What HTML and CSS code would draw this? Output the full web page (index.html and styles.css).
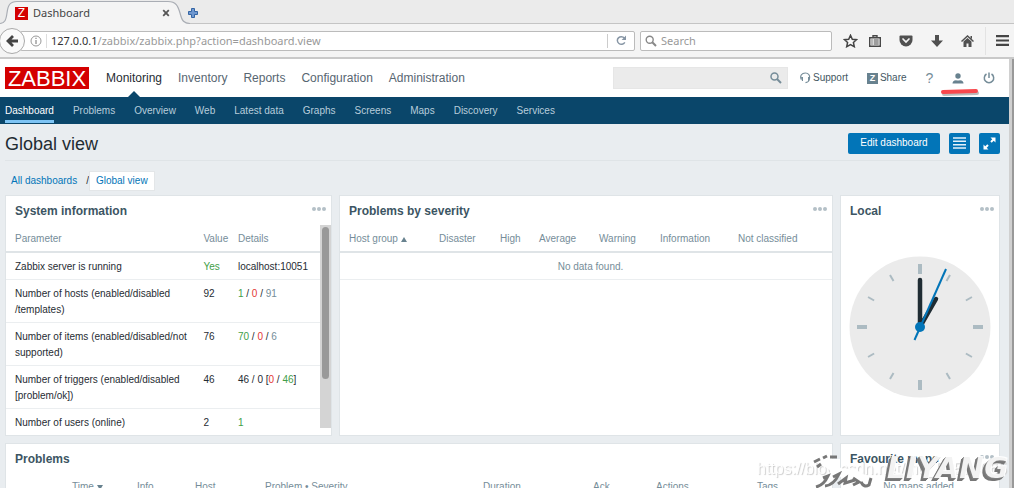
FILE: index.html
```html
<!DOCTYPE html>
<html lang="en">
<head>
<meta charset="utf-8">
<title>Dashboard</title>
<link rel="stylesheet" href="styles.css">
</head>
<body>
<div class="browser">
  <div class="tabstrip">
    <svg class="tab-shape" width="190" height="25" viewBox="0 0 190 25"><path d="M0 24C5 23 6 20 7 13C8 5 10 1.500 17 1.500H168C176 1.500 178 6 180 13C182 21 184 23.500 190 24V25H0Z" fill="#f4f4f4"/><path d="M0 23.500C5 23 6 20 7 13C8 5 10 1.500 17 1.500H168C176 1.500 178 6 180 13C182 21 184 23.500 190 23.500" fill="none" stroke="#a9adb4" stroke-width="1.200"/></svg>
    <div class="tab">
      <span class="favicon">Z</span>
      <span class="tab-title">Dashboard</span>
      <button class="bare" aria-label="Close tab"><svg width="8" height="8" viewBox="0 0 8 8"><path d="M1.200 1.200L6.800 6.800M6.800 1.200L1.200 6.800" stroke="#555" stroke-width="1.800"/></svg></button>
    </div>
    <button class="bare" aria-label="New tab"><svg width="10" height="10" viewBox="0 0 10 10"><path d="M3.500 .5h3v3h3v3h-3v3h-3v-3h-3v-3h3z" fill="#6f98d0" stroke="#3465a4"/></svg></button>
  </div>
  <div class="toolbar">
    <button class="back" aria-label="Back"><svg width="13" height="12" viewBox="0 0 13 12"><path d="M7 1L2 6L7 11M2 6H12" fill="none" stroke="#444" stroke-width="2.800"/></svg></button>
    <div class="address">
      <svg width="12" height="12" viewBox="0 0 12 12"><circle cx="6" cy="6" r="5" fill="none" stroke="#999"/><path d="M6 5v4M6 2.700v1.200" stroke="#888" stroke-width="1.200"/></svg>
      <span class="url"><b>127.0.0.1</b>/zabbix/zabbix.php?action=dashboard.view</span>
      <button class="bare reload" aria-label="Reload"><svg width="11" height="11" viewBox="0 0 11 11"><path d="M8.800 7.400A4 3.800 0 1 1 8.400 3" fill="none" stroke="#8796a5" stroke-width="1.500"/><path d="M10 .5V5H5.600Z" fill="#8796a5"/></svg></button>
    </div>
    <label class="web-search">
      <svg width="12" height="12" viewBox="0 0 12 12"><circle cx="4.700" cy="4.700" r="3.500" fill="none" stroke="#888" stroke-width="1.400"/><path d="M7.300 7.300L11 11" stroke="#888" stroke-width="2"/></svg>
      <input type="text" placeholder="Search" aria-label="Search the web">
    </label>
    <div class="tools">
      <button class="bare star" aria-label="Bookmark"><svg width="15" height="14" viewBox="0 0 15 14"><path d="M7.500 1.300L9.300 5.200L13.500 5.700L10.400 8.500L11.300 12.700L7.500 10.600L3.700 12.700L4.600 8.500L1.500 5.700L5.700 5.200Z" fill="#f8f8f8" stroke="#444" stroke-width="1.500"/></svg></button>
      <button class="bare" aria-label="Library"><svg width="12" height="12" viewBox="0 0 12 12"><path d="M.7 2.700h10.600v8.600H.7zM4 2.700V.7h4v2" fill="none" stroke="#484848" stroke-width="1.400"/><path d="M2.300 5h1.400M4.700 5h5M2.300 7h1.400M4.700 7h5M2.300 9h1.400M4.700 9h5" stroke="#484848"/></svg></button>
      <button class="bare" aria-label="Pocket"><svg width="14" height="12" viewBox="0 0 14 12"><path d="M1.500 .5h11q1 0 1 1V5a6.500 6.500 0 0 1-13 0V1.500q0-1 1-1z" fill="#505050"/><path d="M4 4l3 3l3-3" fill="none" stroke="#f4f4f4" stroke-width="1.700" stroke-linecap="round"/></svg></button>
      <button class="bare" aria-label="Downloads"><svg width="12" height="12" viewBox="0 0 12 12"><path d="M4 0h4v5.500h4L6 12L0 5.500h4z" fill="#505050"/></svg></button>
      <button class="bare" aria-label="Home"><svg width="13" height="12" viewBox="0 0 13 12"><path d="M.5 6.500L6.500 1l6 5.500" fill="none" stroke="#505050" stroke-width="1.500"/><path d="M9.500 1H11v3L9.500 3zM2.500 6.500L6.500 3l4 3.500V12h-3V8.500h-2V12h-3z" fill="#505050"/></svg></button>
      <button class="bare menu" aria-label="Menu"><svg width="13" height="11" viewBox="0 0 13 11"><path d="M0 1.200h13M0 5.500h13M0 9.800h13" stroke="#444" stroke-width="2.200"/></svg></button>
    </div>
  </div>
</div>

<div class="viewport">
<div class="page">
  <header class="top">
    <a class="logo" href="#">ZABBIX</a>
    <nav class="main-nav">
      <a class="current" href="#">Monitoring</a><a href="#">Inventory</a><a href="#">Reports</a><a href="#">Configuration</a><a href="#">Administration</a>
    </nav>
    <form class="search">
      <input type="text" aria-label="Search">
      <button class="bare" type="button" aria-label="Search"><svg width="12" height="12" viewBox="0 0 12 12"><circle cx="4.500" cy="4.500" r="3.500" fill="none" stroke="#768d99" stroke-width="1.500"/><path d="M7 7l4 4" stroke="#768d99" stroke-width="2"/></svg></button>
    </form>
    <div class="user-nav">
      <a href="#"><svg width="11" height="12" viewBox="0 0 11 12"><path d="M1.300 7.500C-.5 3.500 2 1 5.300 1S10.500 3.500 9.200 7.500C8.800 9.500 7.500 10.500 5.500 10.700" fill="none" stroke="#768d99" stroke-width="1.200"/><path d="M1 5h2v4H2zM8 5h2L9 9H8z" fill="#768d99"/></svg>Support</a>
      <a href="#"><span class="share">Z</span>Share</a>
      <a class="help" href="#">?</a>
      <a class="profile" href="#" aria-label="Profile"><svg width="12" height="11" viewBox="0 0 12 11"><circle cx="6" cy="3" r="2.700" fill="#68828f"/><path d="M.5 10.500Q.5 7.500 4 7.200Q6 8 8 7.200Q11.500 7.500 11.500 10.500z" fill="#68828f"/></svg><svg class="mark" width="42" height="10" viewBox="0 0 42 10"><path d="M4 6L37 5" stroke="#bbb" stroke-width="4" stroke-linecap="round"/><path d="M3 4L36 3" stroke="#f8484d" stroke-width="4" stroke-linecap="round"/></svg></a>
      <a href="#" aria-label="Sign out"><svg width="12" height="12" viewBox="0 0 12 12"><path d="M3.500 2A4.700 4.700 0 1 0 8.500 2M6 .5V6" fill="none" stroke="#768d99" stroke-width="1.500"/></svg></a>
    </div>
  </header>
  <nav class="sub-nav">
    <a class="current" href="#">Dashboard</a><a href="#">Problems</a><a href="#">Overview</a><a href="#">Web</a><a href="#">Latest data</a><a href="#">Graphs</a><a href="#">Screens</a><a href="#">Maps</a><a href="#">Discovery</a><a href="#">Services</a>
  </nav>
  <main>
    <div class="heading">
      <h1>Global view</h1>
      <button class="action">Edit dashboard</button>
      <button class="action square" aria-label="Actions"><svg width="13" height="12" viewBox="0 0 13 12"><path d="M0 1h13M0 4.300h13M0 7.700h13M0 11h13" stroke="#e5f1fa" stroke-width="1.600"/></svg></button>
      <button class="action square" aria-label="Fullscreen"><svg width="13" height="13" viewBox="0 0 13 13"><path d="M7.500 .5h5v5zM.5 7.500v5h5z" fill="#fff"/><path d="M8 5l3-3M2 11l3-3" stroke="#fff" stroke-width="2"/></svg></button>
    </div>
    <div class="crumbs"><a href="#">All dashboards</a><span>/</span><a class="selected" href="#">Global view</a></div>
    <div class="widgets">
      <section class="widget">
        <div class="widget-head"><h2>System information</h2><button class="bare dots" aria-label="Options"><i></i><i></i><i></i></button></div>
        <div class="scroll">
          <table class="system">
            <colgroup><col class="c-param"><col class="c-value"><col></colgroup>
            <thead><tr><th>Parameter</th><th>Value</th><th>Details</th></tr></thead>
            <tbody>
              <tr><td>Zabbix server is running</td><td><span class="green">Yes</span></td><td>localhost:10051</td></tr>
              <tr><td>Number of hosts (enabled/disabled<br>/templates)</td><td>92</td><td><span class="green">1</span> / <span class="red">0</span> / <span class="grey">91</span></td></tr>
              <tr><td>Number of items (enabled/disabled/not<br>supported)</td><td>76</td><td><span class="green">70</span> / <span class="red">0</span> / <span class="grey">6</span></td></tr>
              <tr><td>Number of triggers (enabled/disabled<br>[problem/ok])</td><td>46</td><td>46 / 0 [<span class="red">0</span> / <span class="green">46</span>]</td></tr>
              <tr><td>Number of users (online)</td><td>2</td><td><span class="green">1</span></td></tr>
            </tbody>
          </table>
          <div class="bar"><div class="thumb"></div></div>
        </div>
      </section>
      <section class="widget">
        <div class="widget-head"><h2>Problems by severity</h2><button class="bare dots" aria-label="Options"><i></i><i></i><i></i></button></div>
        <table class="severity">
          <colgroup><col class="s1"><col class="s2"><col class="s3"><col class="s4"><col class="s5"><col class="s6"><col></colgroup>
          <thead><tr><th>Host group <span class="up"></span></th><th>Disaster</th><th>High</th><th>Average</th><th>Warning</th><th>Information</th><th>Not classified</th></tr></thead>
          <tbody><tr><td colspan="7">No data found.</td></tr></tbody>
        </table>
      </section>
      <section class="widget">
        <div class="widget-head"><h2>Local</h2><button class="bare dots" aria-label="Options"><i></i><i></i><i></i></button></div>
        <div class="clock"><svg viewBox="0 0 142 142"><circle cx="71" cy="71" r="70.500" fill="#ebebeb"/>
          <g stroke="#acbbc2" stroke-width="4"><path d="M71 8v10M71 124v10M8 71h10M124 71h10"/></g>
          <g stroke="#acbbc2" stroke-width="2"><path d="M71 11v7" transform="rotate(30 71 71)"/><path d="M71 11v7" transform="rotate(60 71 71)"/><path d="M71 11v7" transform="rotate(120 71 71)"/><path d="M71 11v7" transform="rotate(150 71 71)"/><path d="M71 11v7" transform="rotate(210 71 71)"/><path d="M71 11v7" transform="rotate(240 71 71)"/><path d="M71 11v7" transform="rotate(300 71 71)"/><path d="M71 11v7" transform="rotate(330 71 71)"/></g>
          <path d="M71 71V24M71 71L87 43" stroke="#1f2c33" stroke-width="4.500" stroke-linecap="round"/><path d="M65.500 84L97 13" stroke="#0275b8" stroke-width="2"/><circle cx="71" cy="71" r="5" fill="#0275b8"/></svg></div>
      </section>
      <section class="widget wide">
        <div class="widget-head"><h2>Problems</h2></div>
        <table class="problems">
          <colgroup><col class="p1"><col class="p2"><col class="p3"><col class="p4"><col class="p5"><col class="p6"><col class="p7"><col></colgroup>
          <thead><tr><th>Time <span class="down"></span></th><th>Info</th><th>Host</th><th>Problem • Severity</th><th>Duration</th><th>Ack</th><th>Actions</th><th>Tags</th></tr></thead>
        </table>
      </section>
      <section class="widget">
        <div class="widget-head"><h2>Favourite maps</h2><button class="bare dots" aria-label="Options"><i></i><i></i><i></i></button></div>
        <p class="empty">No maps added.</p>
      </section>
    </div>
  </main>
</div>
<div class="page-bar"></div>
</div>
<div class="watermark">
  <span class="wm-url">https://blog.csdn.net/m0_52574065</span>
  <svg class="wm-sign" width="70" height="35" viewBox="0 0 70 35"><path d="M9 10L17 6H29V15L45 17L58 24V32H53L44 25L36 28L28 23L20 29H10L20 18Z" fill="#fff"/><g fill="none" stroke="#777" stroke-width="3"><path d="M3 9l6-3M12 5l4-2M19 4h7M6 14l4-3M5 34q8-2 12-11l-5 2M14 33q9-1 14-12l-6 3M27 31l8-6-1 5 10-3M42 25l6 4-6 3M50 29q3 6 8 3l2-7"/></g></svg>
  <span class="wm-name">LIYANG</span>
</div>
</body>
</html>
```
FILE: styles.css
```css
* { box-sizing: border-box; }
body { margin: 0; height: 100vh; overflow: hidden; display: flex; flex-direction: column; font: 11px/16px "Liberation Sans", Arial, sans-serif; color: #1f2c33; background: #e9edf0; }
a { text-decoration: none; color: #0275b8; }
svg { display: block; flex: none; }
button, input { font: inherit; }
.bare { border: 0; padding: 0; background: none; display: flex; align-items: center; flex: none; }

.browser { font-family: "Noto Sans", sans-serif; background: #f4f4f4; border-bottom: 2px solid #c9c9c9; }
.tabstrip { position: relative; height: 24px; display: flex; align-items: center; gap: 18px; padding: 3px 0 0 15px; background: #ebebeb; border-bottom: 1px solid #c4c4c4; }
.tab-shape { position: absolute; left: 0; top: 0; }
.tab { position: relative; width: 155px; display: flex; align-items: center; gap: 5px; color: #444; }
.tab-title { flex: 1; }
.favicon { width: 13px; height: 13px; background: #d40000; color: #fff; font: 12px/13px "Liberation Sans", sans-serif; text-align: center; }
.toolbar { height: 33px; display: flex; align-items: center; padding-right: 5px; }
.back { width: 26px; height: 26px; margin-left: -1px; border: 1px solid #aaa; border-radius: 50%; background: #fafafa; padding: 0; display: flex; align-items: center; justify-content: center; z-index: 1; flex: none; }
.address { flex: 1; height: 20px; margin-left: -5px; padding-left: 9px; border: 1px solid #bbb; border-radius: 2px; background: #fff; display: flex; align-items: center; gap: 4px; }
.url { flex: 1; border-left: 1px solid #ddd; padding-left: 4px; font-size: 11px; line-height: 14px; color: #999; }
.url b { font-weight: 400; color: #333; }
.reload { height: 14px; width: 27px; border-left: 1px solid #ccc; justify-content: center; }
.web-search { width: 192px; height: 20px; margin-left: 5px; padding-left: 4px; border: 1px solid #bbb; border-radius: 2px; background: #fff; display: flex; align-items: center; gap: 4px; }
.web-search input { width: 160px; border: 0; padding: 0; background: none; outline: 0; font-size: 11px; line-height: 14px; }
.web-search input::placeholder { color: #999; opacity: 1; }
.tools { display: flex; align-items: center; gap: 18px; margin-left: 11px; }
.star { margin-right: -7px; }
.menu { height: 28px; margin-left: -7px; padding-left: 10px; border-left: 1px solid #e3e3e3; }

.viewport { flex: 1; min-height: 0; display: flex; overflow: hidden; }
.page { flex: 1; min-width: 0; }
.page-bar { width: 5px; background: #999; border-left: 3px solid #d0d0d0; }
.top { height: 38px; display: flex; align-items: center; padding: 0 14px 0 5px; background: #fff; }
.logo { width: 84px; height: 22px; background: #d40000; color: #fff; font-size: 22px; line-height: 23px; text-align: center; }
.main-nav { flex: 1; display: flex; gap: 16px; margin-left: 17px; font-size: 12px; align-self: stretch; align-items: center; }
.main-nav a { position: relative; height: 38px; line-height: 38px; color: #576671; }
.main-nav .current { color: #1f2c33; }
.main-nav .current::after { content: ""; position: absolute; left: 50%; bottom: 0; margin-left: -6px; border: 6px solid transparent; border-top: 0; border-bottom-color: #0a466a; }
.search { width: 175px; height: 22px; display: flex; align-items: center; padding-right: 5px; background: #ebebeb; border: 1px solid #e6e6e6; }
.search input { flex: 1; min-width: 0; border: 0; background: none; outline: 0; }
.user-nav { width: 195px; margin-left: 12px; display: flex; justify-content: space-between; align-items: center; font-size: 10px; }
.user-nav a { display: flex; align-items: center; gap: 2px; color: #445762; }
.share { width: 11px; height: 11px; background: #68828f; color: #fff; font: bold 9px/11px "Liberation Sans", sans-serif; text-align: center; }
.user-nav .help { font-size: 14px; color: #768d99; }
.profile { position: relative; }
.mark { position: absolute; left: -12px; top: 15px; }
.sub-nav { height: 27px; display: flex; gap: 19px; padding-left: 5px; background: #0a466a; line-height: 28px; font-size: 10px; }
.sub-nav a { color: #b8cddb; }
.sub-nav .current { color: #fff; border-bottom: 3px solid #7dc4f5; height: 26px; }
main { padding: 0 9px 0 5px; }
.heading { height: 37px; display: flex; align-items: center; gap: 9px; padding-top: 2px; border-bottom: 1px solid #dfe4e7; }
h1 { flex: 1; margin: 0; font-size: 18px; font-weight: 400; line-height: 24px; padding-top: 2px; }
.action { height: 21px; min-width: 92px; border: 0; border-radius: 2px; background: #0275b8; color: #fff; padding: 0; font-size: 10px; display: flex; align-items: center; justify-content: center; }
.square { min-width: 21px; width: 21px; }
.crumbs { height: 34px; padding: 10px 0 4px 6px; display: flex; align-items: center; font-size: 10px; }
.crumbs span { margin-left: 9px; }
.crumbs .selected { background: #fff; padding: 1px 6px; border: 1px solid #e3e6e8; }
.widgets { display: grid; grid-template-columns: 327fr 494fr 160fr; grid-template-rows: 241px 241px; gap: 7px; }
.widget { min-width: 0; background: #fff; border: 1px solid #dfe4e7; }
.wide { grid-column: span 2; }
.widget-head { height: 29px; display: flex; justify-content: space-between; padding: 6px 5px 0 9px; }
h2 { margin: 0; font-size: 12px; line-height: 18px; color: #3c5563; }
.dots { gap: 1px; height: 14px; }
.dots i { width: 4px; height: 4px; border-radius: 50%; background: #b4c0c7; }
.scroll { display: flex; height: 203px; overflow: hidden; }
table { border-collapse: collapse; width: 100%; font-size: 10px; }
th { font-weight: 400; text-align: left; color: #768d99; padding: 6px 0 4px 9px; border-bottom: 2px solid #dfe4e7; white-space: nowrap; }
td { vertical-align: top; padding: 6px 0 4px 9px; border-bottom: 1px solid #ebeef0; white-space: nowrap; }
.system { table-layout: fixed; flex: 1; height: max-content; }
.c-param { width: 60%; }
.c-value { width: 11%; }
.bar { width: 11px; flex: none; background: #d4d4d4; padding: 2px; }
.thumb { width: 7px; height: 152px; border-radius: 4px; background: #999; }
.green { color: #429e47; } .red { color: #e33734; } .grey { color: #768d99; }
.severity { table-layout: fixed; }
.s1 { width: 90px; } .s2, .s5 { width: 61px; } .s3 { width: 39px; } .s4 { width: 60px; } .s6 { width: 78px; }
.severity td { text-align: center; color: #768d99; }
.up, .down { display: inline-block; border: 3px solid transparent; border-top: 0; border-bottom: 5px solid #68828f; }
.down { border-bottom: 0; border-top: 5px solid #68828f; }
.clock { display: flex; justify-content: center; padding-top: 31px; }
.clock svg { width: 142px; }
.problems { table-layout: fixed; }
.problems th:first-child { padding-left: 66px; }
.p1 { width: 122px; } .p2 { width: 58px; } .p3 { width: 70px; } .p4 { width: 218px; } .p5 { width: 110px; } .p6 { width: 63px; } .p7 { width: 101px; }
.empty { margin: 6px 0; text-align: center; font-size: 10px; color: #768d99; }
.watermark { position: fixed; right: 5px; bottom: 0; width: 252px; height: 35px; overflow: hidden; }
.wm-url { position: absolute; left: 0; top: 5px; font-size: 16px; line-height: 22px; color: #fff; text-shadow: 1px 1px 1px #ccc; white-space: nowrap; }
.wm-sign { position: absolute; left: 54px; top: 0; }
.wm-name { position: absolute; right: 0; top: -1px; font: italic bold 30px/32px "DejaVu Sans", sans-serif; color: rgba(255, 255, 255, .9); text-shadow: -1px 1px 0 #808080, -2px 2px 0 #777, -3px 3px 0 #777; }
```
